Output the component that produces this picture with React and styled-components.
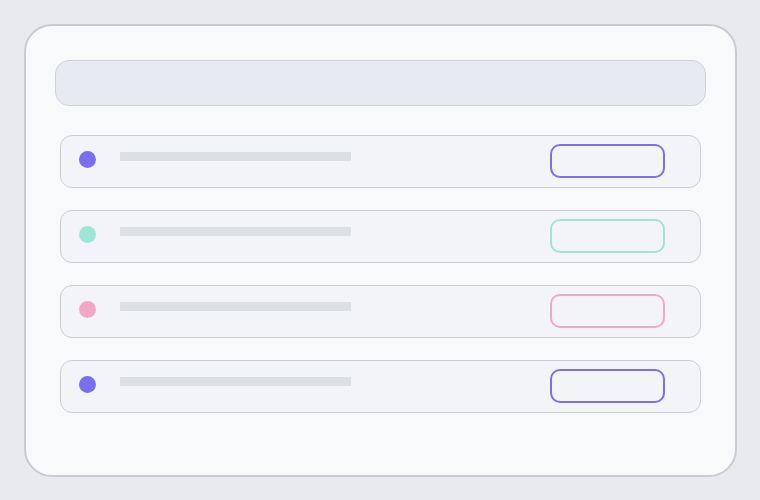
import React from 'react';
import styled, { createGlobalStyle } from 'styled-components';

const GlobalStyle = createGlobalStyle`
  html, body {
    margin: 0;
    padding: 0;
    background: #e9eaee;
    font-family: Inter, "Liberation Sans", sans-serif;
  }
`;

const Page = styled.div`
  width: 760px;
  height: 500px;
  box-sizing: border-box;
  padding: 24px 23px 23px 24px;
`;

const Panel = styled.div`
  box-sizing: border-box;
  height: 453px;
  background: #f8f9fb;
  border: 2px solid #c9cbd2;
  border-radius: 28px;
  padding: 34px 29px;
  display: flex;
  flex-direction: column;
`;

const SearchBar = styled.div`
  height: 46px;
  box-sizing: border-box;
  background: #e8eaf2;
  border: 1px solid #cfd1d8;
  border-radius: 14px;
`;

const List = styled.div`
  display: flex;
  flex-direction: column;
  gap: 22px;
  margin-top: 29px;
  padding: 0 5px;
`;

const Row = styled.div`
  box-sizing: border-box;
  height: 53px;
  display: flex;
  align-items: flex-start;
  padding: 0 35px 0 18px;
  background: #f3f4f8;
  border: 1px solid #cbcdd3;
  border-radius: 12px;
`;

const Dot = styled.span`
  margin-top: 15px;
  width: 17px;
  height: 17px;
  border-radius: 50%;
  background: ${p => p.$color};
  flex-shrink: 0;
`;

const Line = styled.span`
  margin: 16px 0 0 24px;
  width: 231px;
  height: 9px;
  background: #dcdfe4;
`;

const Action = styled.button`
  margin: 8px 0 0 auto;
  width: 115px;
  height: 34px;
  box-sizing: border-box;
  background: transparent;
  border: 2px solid ${p => p.$color};
  border-radius: 10px;
  padding: 0;
`;

const items = [
  { id: 1, color: '#7b6ef0' },
  { id: 2, color: '#9de6d6' },
  { id: 3, color: '#f2a7c3' },
  { id: 4, color: '#7b6ef0' },
];

const App = () => {
  return (
    <Page>
      <GlobalStyle />
      <Panel>
        <SearchBar />
        <List>
          {items.map(item => (
            <Row key={item.id}>
              <Dot $color={item.color} />
              <Line />
              <Action $color={item.color} />
            </Row>
          ))}
        </List>
      </Panel>
    </Page>
  );
};

export default App;
